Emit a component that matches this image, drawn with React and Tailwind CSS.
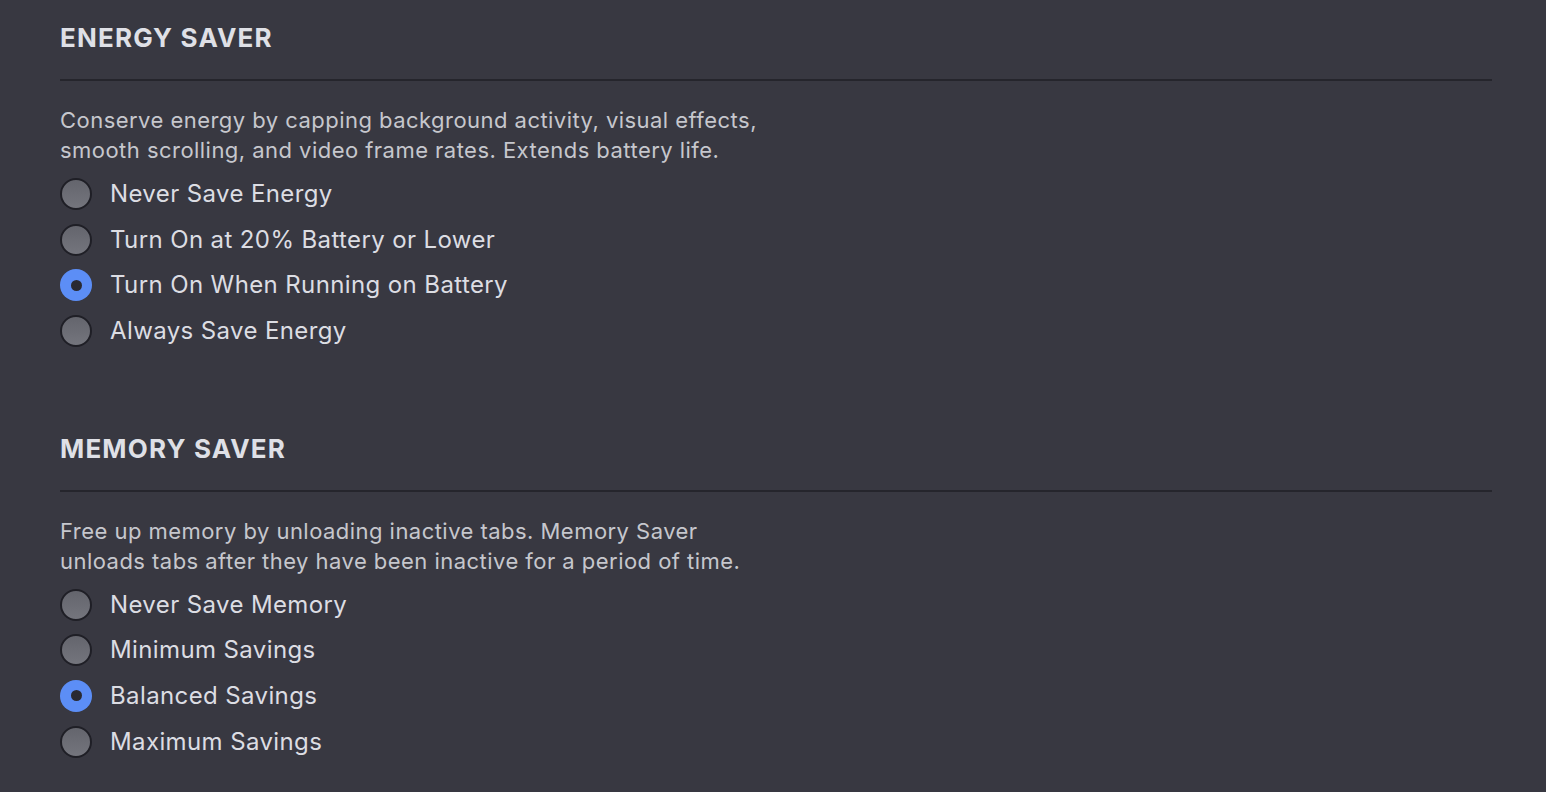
import React, { useState } from 'react';

const SECTIONS = [
  {
    id: 'energy',
    title: 'ENERGY SAVER',
    desc: [
      'Conserve energy by capping background activity, visual effects,',
      'smooth scrolling, and video frame rates. Extends battery life.',
    ],
    options: [
      'Never Save Energy',
      'Turn On at 20% Battery or Lower',
      'Turn On When Running on Battery',
      'Always Save Energy',
    ],
    initial: 2,
  },
  {
    id: 'memory',
    title: 'MEMORY SAVER',
    desc: [
      'Free up memory by unloading inactive tabs. Memory Saver',
      'unloads tabs after they have been inactive for a period of time.',
    ],
    options: ['Never Save Memory', 'Minimum Savings', 'Balanced Savings', 'Maximum Savings'],
    initial: 2,
  },
];

function Radio({ checked }) {
  if (checked) {
    return (
      <span className="flex h-[32px] w-[32px] shrink-0 items-center justify-center rounded-full bg-[#5c8ef6]">
        <span className="h-[11px] w-[11px] rounded-full bg-[#2a2a31]" />
      </span>
    );
  }
  return (
    <span className="h-[32px] w-[32px] shrink-0 rounded-full border-2 border-[#1f1f26] bg-gradient-to-b from-[#64656d] to-[#74757d]" />
  );
}

function Section({ section }) {
  const [selected, setSelected] = useState(section.initial);

  return (
    <section>
      <h2 className="text-[26px] leading-[32px] font-bold tracking-[0.045em] text-[#dfe0e6]">
        {section.title}
      </h2>
      <div className="mt-[25px] h-[2px] bg-[#25252c]" />

      <p className="mt-[24px] text-[22px] leading-[30px] tracking-[0.021em] text-[#c6c7cd]">
        {section.desc.map((line, i) => (
          <span key={i} className="block">{line}</span>
        ))}
      </p>

      <div className="mt-[6px] flex flex-col">
        {section.options.map((label, idx) => (
          <button
            key={label}
            onClick={() => setSelected(idx)}
            className="flex h-[45.7px] items-center gap-[18px] text-left"
          >
            <Radio checked={selected === idx} />
            <span className="text-[24px] tracking-[0.016em] text-[#dcdde3]">{label}</span>
          </button>
        ))}
      </div>
    </section>
  );
}

export default function App() {
  return (
    <div
      className="flex min-h-screen flex-col gap-[79px] bg-[#383841] pl-[60px] pr-[54px] pt-[22px]"
      style={{ fontFamily: 'Inter, "Noto Sans", sans-serif' }}
    >
      {SECTIONS.map(s => (
        <Section key={s.id} section={s} />
      ))}
    </div>
  );
}
